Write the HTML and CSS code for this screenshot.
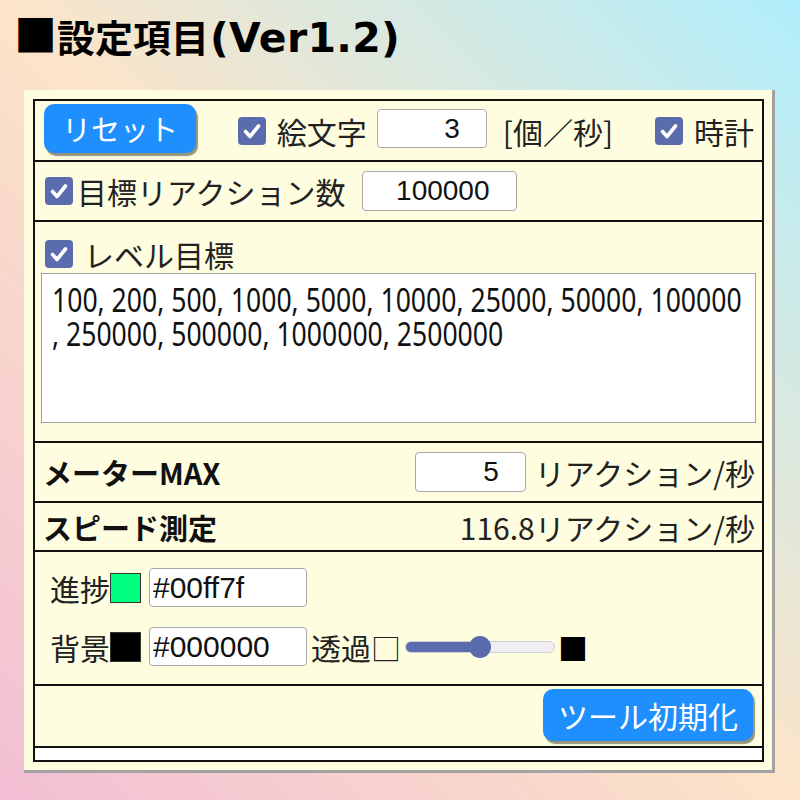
FILE: index.html
```html
<!DOCTYPE html>
<html lang="ja">
<head>
<meta charset="utf-8">
<title>設定項目</title>
<link rel="stylesheet" href="styles.css">
</head>
<body>
<h1 class="title"><span class="t-sq">■</span>設定項目<span class="t-ver">(Ver1.2)</span></h1>
<div class="panel">
  <div class="table">
    <div class="row r1">
      <button class="btn btn-reset">リセット</button>
      <div class="grp">
        <span class="cb"><svg viewBox="0 0 28 28" width="28" height="28"><rect width="28" height="28" rx="4" fill="#5a6cad"/><path d="M7.5 14.5 L12 19.5 L20.5 9" fill="none" stroke="#fff" stroke-width="3.6" stroke-linecap="round" stroke-linejoin="round"/></svg></span>
        <span class="lbl ml11">絵文字</span>
        <input class="num w-emoji ml10" type="text" value="3">
        <span class="lbl ml16">[個／秒]</span>
      </div>
      <div class="grp">
        <span class="cb"><svg viewBox="0 0 28 28" width="28" height="28"><rect width="28" height="28" rx="4" fill="#5a6cad"/><path d="M7.5 14.5 L12 19.5 L20.5 9" fill="none" stroke="#fff" stroke-width="3.6" stroke-linecap="round" stroke-linejoin="round"/></svg></span>
        <span class="lbl ml11">時計</span>
      </div>
    </div>
    <div class="row r2">
      <span class="cb"><svg viewBox="0 0 28 28" width="28" height="28"><rect width="28" height="28" rx="4" fill="#5a6cad"/><path d="M7.5 14.5 L12 19.5 L20.5 9" fill="none" stroke="#fff" stroke-width="3.6" stroke-linecap="round" stroke-linejoin="round"/></svg></span>
      <span class="lbl ml4">目標リアクション数</span>
      <input class="num w-goal ml16" type="text" value="100000">
    </div>
    <div class="row r3">
      <div class="lvl-head">
        <span class="cb"><svg viewBox="0 0 28 28" width="28" height="28"><rect width="28" height="28" rx="4" fill="#5a6cad"/><path d="M7.5 14.5 L12 19.5 L20.5 9" fill="none" stroke="#fff" stroke-width="3.6" stroke-linecap="round" stroke-linejoin="round"/></svg></span>
        <span class="lbl ml11">レベル目標</span>
      </div>
      <div class="levels" role="textbox" aria-multiline="true">
        <div class="levels-text">100, 200, 500, 1000, 5000, 10000, 25000, 50000, 100000
, 250000, 500000, 1000000, 2500000</div>
      </div>
    </div>
    <div class="row r4">
      <span class="bold">メーターMAX</span>
      <div class="grp">
        <input class="num w-max" type="text" value="5">
        <span class="lbl ml9">リアクション/秒</span>
      </div>
    </div>
    <div class="row r5">
      <span class="bold">スピード測定</span>
      <span class="lbl">116.8リアクション/秒</span>
    </div>
    <div class="row r6">
      <div class="cline">
        <span class="lbl">進捗</span>
        <span class="swatch sw-green"></span>
        <input class="hex" type="text" value="#00ff7f">
      </div>
      <div class="cline">
        <span class="lbl">背景</span>
        <span class="swatch sw-black"></span>
        <input class="hex" type="text" value="#000000">
        <span class="lbl ml4">透過□</span>
        <input class="range" type="range" min="0" max="100" value="50">
        <span class="lbl blk ml3">■</span>
      </div>
    </div>
    <div class="row r7">
      <button class="btn btn-init">ツール初期化</button>
    </div>
    <div class="r8"></div>
  </div>
</div>
</body>
</html>
```

FILE: styles.css
```css
* { box-sizing: border-box; }
html, body { margin: 0; padding: 0; }
body {
  width: 800px;
  height: 800px;
  overflow: hidden;
  background: linear-gradient(45deg, #f2bed4 0%, #fce4c8 50%, #b0eefc 100%);
  font-family: "Noto Sans CJK JP", "Noto Sans", sans-serif;
  color: #222;
}
.title {
  margin: 0;
  height: 90px;
  padding: 5px 0 0 15px;
  font-size: 38px;
  font-weight: 700;
  line-height: 56px;
  color: #000;
  white-space: nowrap;
}
.t-sq { font-size: 43px; margin-left: -1px; }
.t-ver { font-family: "DejaVu Sans", sans-serif; font-size: 41px; margin-left: 1px; letter-spacing: 0.3px; }
.panel {
  margin-left: 24px;
  width: 751px;
  height: 683px;
  background: #fffde0;
  border-right: 3px solid #a2a2a2;
  border-bottom: 3px solid #a2a2a2;
  padding: 9px 8px 8px 9px;
}
.table {
  border: 2px solid #111;
  height: 663px;
  display: flex;
  flex-direction: column;
}
.row {
  border-bottom: 2px solid #111;
  display: flex;
  align-items: center;
  flex: none;
}
.r1 { height: 61px; padding: 0 8px 0 9px; justify-content: space-between; }
.r2 { height: 60px; padding: 0 0 0 10px; }
.r3 { height: 221px; padding: 13px 6px 0; flex-direction: column; align-items: stretch; }
.r4 { height: 60px; padding: 0 7px 0 8px; justify-content: space-between; }
.r5 { height: 49px; padding: 0 7px 0 8px; justify-content: space-between; }
.r6 { height: 134px; padding: 16px 0 0 15px; flex-direction: column; align-items: flex-start; justify-content: flex-start; gap: 20px; }
.r7 { height: 62px; padding: 0 9px 2px 0; justify-content: flex-end; }
.r8 { flex: 1; background: #fff; }

.grp { display: flex; align-items: center; }
.lbl { font-size: 30px; line-height: 40px; white-space: nowrap; }
.blk { color: #000; }
.bold { font-size: 29px; line-height: 40px; font-weight: 700; color: #111; white-space: nowrap; }
.ml3 { margin-left: 3px; }
.ml4 { margin-left: 4px; }
.ml9 { margin-left: 9px; }
.ml10 { margin-left: 10px; }
.ml11 { margin-left: 11px; }
.ml16 { margin-left: 16px; }

.cb { width: 28px; height: 28px; display: block; flex: none; }
.cb svg { display: block; }

.btn {
  font-family: "Noto Sans CJK JP", sans-serif;
  font-size: 29px;
  color: #fff;
  background: #1e8ffd;
  border: none;
  border-radius: 10px;
  box-shadow: 2px 3px 1px rgba(90, 90, 70, 0.65);
  padding: 0;
  line-height: 1;
  display: flex;
  align-items: center;
  justify-content: center;
}
.btn-reset { width: 152px; height: 49px; margin-top: -4px; }
.btn-init { width: 210px; height: 52px; font-size: 30px; }

.num {
  height: 39px;
  border: 1px solid #a8a8a8;
  border-radius: 4px;
  background: #fff;
  font-family: "Liberation Sans", Arial, sans-serif;
  font-size: 28px;
  color: #111;
  text-align: right;
  padding: 0 26px 0 4px;
}
.w-emoji { width: 110px; margin-top: -4px; }
.w-goal { width: 155px; height: 40px; }
.w-max { width: 111px; height: 40px; }

.lvl-head { display: flex; align-items: center; height: 38px; padding-left: 4px; }
.levels {
  width: 715px;
  height: 150px;
  border: 1px solid #a0a0a0;
  background: #fff;
  padding: 9px 10px;
  overflow: hidden;
}
.levels-text {
  font-family: "Noto Sans", "Open Sans", sans-serif;
  font-size: 33px;
  line-height: 34px;
  color: #111;
  white-space: pre;
  transform: scaleX(0.805);
  transform-origin: left top;
}

.cline { display: flex; align-items: center; height: 39px; }
.swatch { width: 31px; height: 30px; border: 1px solid #333; margin-left: 0; flex: none; }
.sw-green { background: #00ff7f; }
.sw-black { background: #000; }
.hex {
  width: 158px;
  height: 39px;
  margin-left: 8px;
  border: 1px solid #a8a8a8;
  border-radius: 4px;
  background: #fff;
  font-family: "Liberation Sans", Arial, sans-serif;
  font-size: 30px;
  color: #111;
  padding: 0 3px;
}

.range {
  -webkit-appearance: none;
  appearance: none;
  width: 150px;
  height: 24px;
  margin: 0 0 0 4px;
  background: transparent;
}
.range::-webkit-slider-runnable-track {
  height: 12px;
  border-radius: 6px;
  border: 1px solid #cfcfcf;
  background: linear-gradient(to right, #5a6cad 0, #5a6cad 50%, #efeff2 50%, #efeff2 100%);
}
.range::-webkit-slider-thumb {
  -webkit-appearance: none;
  appearance: none;
  width: 22px;
  height: 22px;
  border-radius: 50%;
  background: #5a6cad;
  border: none;
  margin-top: -6px;
}
```
